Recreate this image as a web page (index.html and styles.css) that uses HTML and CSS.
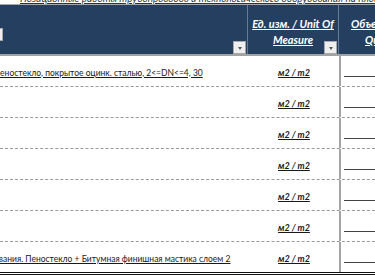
FILE: index.html
```html
<!DOCTYPE html>
<html lang="ru">
<head>
<meta charset="utf-8">
<link rel="stylesheet" href="styles.css">
</head>
<body>
<div class="top"><div class="title">Позиционные работы трубопроводов и технологического оборудования на площадке</div></div>
<div class="head">
  <div class="hc c1"><span class="dd dd-left"></span><span class="dd"></span></div>
  <div class="hc c2"><span class="ht">Ед. изм. / Unit Of<br>Measure</span><span class="dd"></span></div>
  <div class="hc c3"><span class="ht ht3"><span class="l1">Объем / Volume</span><span class="l2">Quantity</span></span></div>
</div>
<div class="rows">
  <div class="row"><div class="c1"><span class="desc shift1">Пеностекло, покрытое оцинк. сталью, 2&lt;=DN&lt;=4, 30</span></div><div class="c2"><span class="unit">м2 / m2</span></div><div class="c3"><span class="blank"></span></div></div>
  <div class="row"><div class="c1"></div><div class="c2"><span class="unit">м2 / m2</span></div><div class="c3"><span class="blank"></span></div></div>
  <div class="row"><div class="c1"></div><div class="c2"><span class="unit">м2 / m2</span></div><div class="c3"><span class="blank"></span></div></div>
  <div class="row"><div class="c1"></div><div class="c2"><span class="unit">м2 / m2</span></div><div class="c3"><span class="blank"></span></div></div>
  <div class="row"><div class="c1"></div><div class="c2"><span class="unit">м2 / m2</span></div><div class="c3"><span class="blank"></span></div></div>
  <div class="row"><div class="c1"></div><div class="c2"><span class="unit">м2 / m2</span></div><div class="c3"><span class="blank"></span></div></div>
  <div class="row last"><div class="c1"><span class="desc shift7">ования. Пеностекло + Битумная финишная мастика слоем 2</span></div><div class="c2"><span class="unit">м2 / m2</span></div><div class="c3"><span class="blank"></span></div></div>
</div>
</body>
</html>
```
FILE: styles.css
```css
html, body {
  margin: 0;
  padding: 0;
  background: #ffffff;
  font-family: Lato, "Open Sans", sans-serif;
  overflow: hidden;
}
body {
  width: 375px;
  height: 275px;
}
.top {
  height: 4px;
  overflow: hidden;
  border-bottom: 1px solid #a8a8a8;
  padding-left: 20px;
}
.title {
  margin-top: -8px;
  font-size: 10px;
  line-height: 12px;
  font-style: italic;
  text-decoration: underline;
  color: #333;
  white-space: nowrap;
}
.head {
  display: flex;
  height: 49px;
  background: #243f60;
  border-bottom: 2px solid #a2a2a2;
}
.hc {
  position: relative;
  height: 100%;
  box-sizing: border-box;
  flex-shrink: 0;
}
.head .c1 { width: 248px; border-right: 1px solid #667a94; }
.head .c2 {
  width: 91px;
  border-right: 1px solid #667a94;
  display: flex;
  justify-content: center;
}
.head .c3 { flex: 1 1 0; min-width: 0; overflow: hidden; }
.ht {
  margin-top: 11px;
  color: #ffffff;
  font-size: 11px;
  line-height: 16px;
  font-weight: bold;
  font-style: italic;
  text-decoration: underline;
  text-align: center;
  white-space: nowrap;
}
.ht3 { display: flex; flex-direction: column; text-align: left; }
.ht3 .l1 { padding-left: 12px; }
.ht3 .l2 { padding-left: 26px; }
.dd {
  position: absolute;
  right: 1px;
  bottom: 0;
  width: 13px;
  height: 13px;
  background: #efefef;
  border: 1px solid #a9a9a9;
  box-sizing: border-box;
}
.dd::after {
  content: "";
  position: absolute;
  left: 4px;
  top: 5px;
  border-left: 2.5px solid transparent;
  border-right: 2.5px solid transparent;
  border-top: 3px solid #555;
}
.dd-left {
  left: -10px;
  right: auto;
  top: 23px;
  bottom: auto;
}
.rows { display: flex; flex-direction: column; }
.row {
  display: flex;
  height: 31px;
  border-bottom: 1px dashed #9a9a9a;
  box-sizing: border-box;
}
.row.last {
  height: 33px;
  border-bottom: 3px double #111;
}
.row > div {
  display: flex;
  align-items: center;
  padding-top: 3px;
  box-sizing: border-box;
  flex-shrink: 0;
}
.row .c1 { width: 248px; overflow: hidden; }
.row .c2 { width: 91px; justify-content: center; padding-left: 1px; }
.row .c3 { flex: 1 1 0; min-width: 0; overflow: hidden; border-left: 2px solid #a4a4a4; }
.desc {
  font-size: 8.5px;
  color: #1a1a1a;
  text-decoration: underline;
  white-space: nowrap;
}
.shift1 { margin-left: -6px; }
.shift7 { margin-left: -6px; }
.unit {
  font-size: 9px;
  font-weight: bold;
  font-style: italic;
  color: #1a1a1a;
  text-decoration: underline;
}
.blank {
  display: inline-block;
  flex-shrink: 0;
  width: 40px;
  margin-left: 3px;
  margin-top: 8px;
  border-bottom: 1px solid #444;
}
```
